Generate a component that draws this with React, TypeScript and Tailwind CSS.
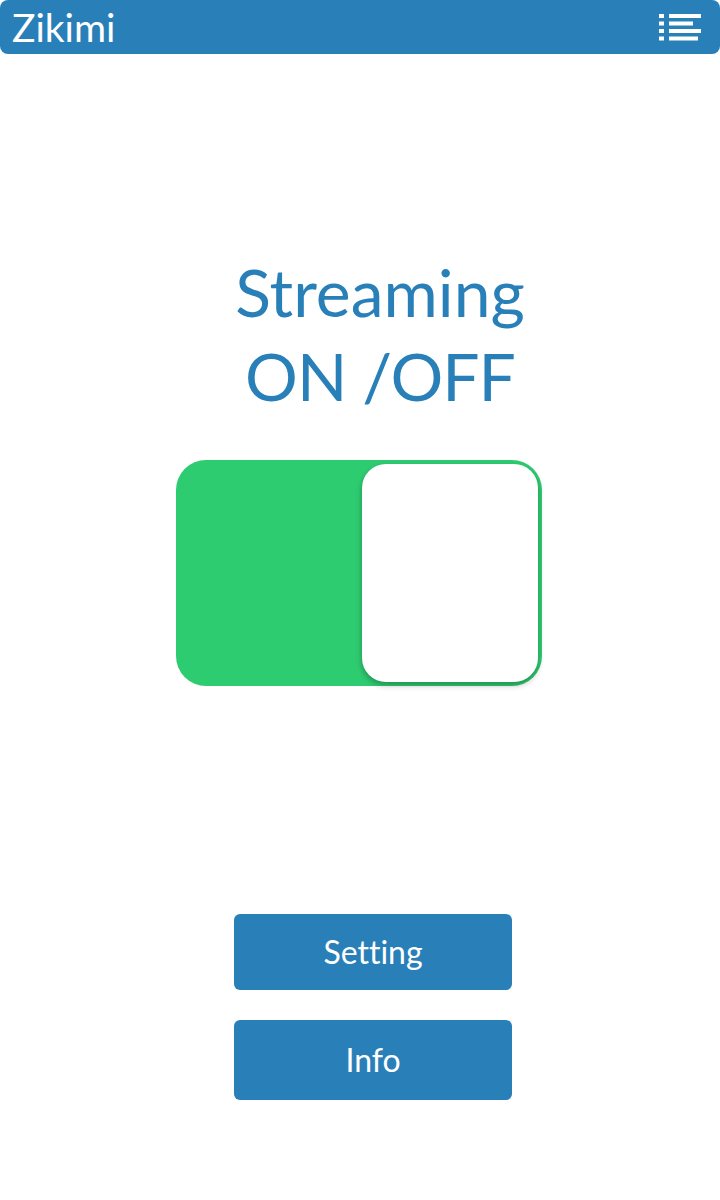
export default function App() {
  return (
    <div className="w-[720px] h-[1200px] bg-white flex flex-col [font-variant-ligatures:none]" style={{ fontFamily: 'Lato, "Open Sans", sans-serif' }}>
      <header className="h-[54px] bg-[#2980b9] rounded-lg flex items-center justify-between pl-3 pr-[19px]">
        <span className="text-white text-[39px] leading-none">Zikimi</span>
        <svg width="42" height="28" viewBox="0 0 42 28" className="text-white" fill="currentColor">
          <rect x="0" y="1" width="5" height="4" />
          <rect x="10" y="1" width="32" height="4" />
          <rect x="0" y="8.5" width="5" height="4" />
          <rect x="10" y="8.5" width="24" height="4" />
          <rect x="0" y="16" width="5" height="4" />
          <rect x="10" y="16" width="32" height="4" />
          <rect x="0" y="23.5" width="5" height="4" />
          <rect x="10" y="23.5" width="29" height="4" />
        </svg>
      </header>

      <div className="mt-[196px] pl-10 text-center text-[#2980b9] text-[66px] leading-[84px]">
        <div>Streaming</div>
        <div className="tracking-[-1px]">ON /OFF</div>
      </div>

      <div className="mt-[42px] flex justify-center pr-[2px]">
        <button className="w-[366px] h-[226px] bg-[#2ecc71] rounded-[30px] p-1 flex justify-end">
          <span className="w-[176px] h-[218px] bg-white rounded-[24px] shadow-[0_3px_6px_rgba(0,0,0,0.3)]" />
        </button>
      </div>

      <div className="mt-[228px] flex flex-col items-center gap-[30px] pl-[26px]">
        <button className="w-[278px] h-[76px] bg-[#2980b9] rounded-md text-white text-[32px]">Setting</button>
        <button className="w-[278px] h-[80px] bg-[#2980b9] rounded-md text-white text-[32px]">Info</button>
      </div>
    </div>
  );
}
